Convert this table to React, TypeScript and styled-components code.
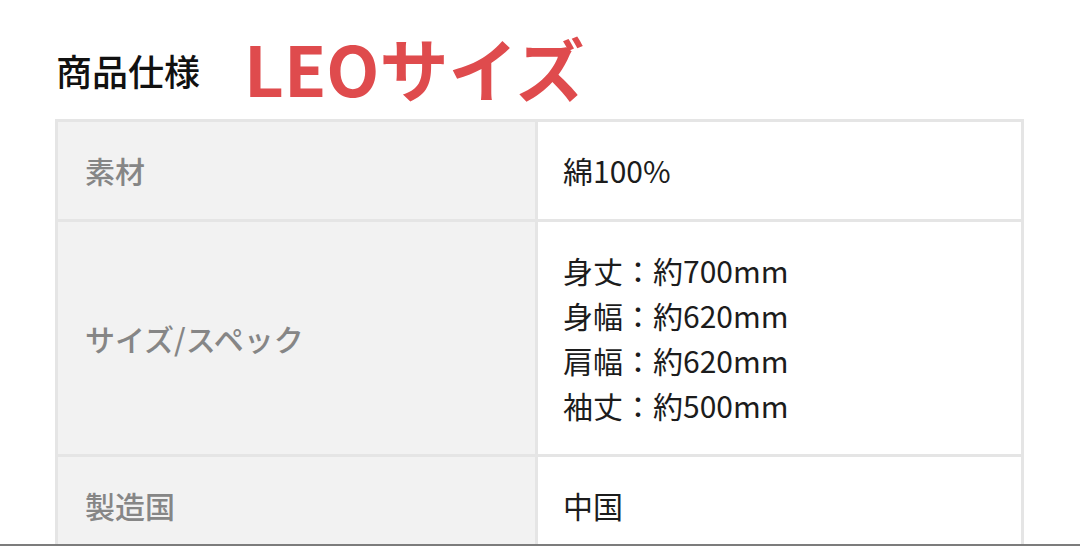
import React from "react";
import styled, { createGlobalStyle } from "styled-components";

const Global = createGlobalStyle`
  html, body { margin: 0; padding: 0; background: #ffffff; }
  body { font-family: "Noto Sans CJK JP", "Noto Sans", sans-serif; }
`;

const Page = styled.div`
  width: 1080px;
  height: 546px;
  box-sizing: border-box;
  overflow: hidden;
  border-bottom: 2px solid #7c7c7c;
  padding: 24px 0 0 55px;
`;

const Heading = styled.div`
  display: flex;
  align-items: center;
  gap: 44px;
  height: 86px;
  margin-bottom: 9px;
  padding-left: 1px;
`;

const HeadingText = styled.h2`
  margin: 6px 0 0;
  font-size: 36px;
  font-weight: 500;
  color: #111;
  line-height: 1;
`;

const SizeName = styled.span`
  font-size: 69px;
  font-weight: 700;
  color: #df4b4d;
  line-height: 1;
`;

const Table = styled.div`
  width: 969px;
  box-sizing: border-box;
  display: grid;
  grid-template-columns: 477px 483px;
  gap: 3px;
  background: #e5e5e5;
  border: 3px solid #e5e5e5;
`;

const Cell = styled.div<{ $label?: boolean }>`
  display: flex;
  flex-direction: column;
  justify-content: center;
  padding: 26px 0 26px ${(p) => (p.$label ? "27px" : "25px")};
  background: ${(p) => (p.$label ? "#f2f2f2" : "#ffffff")};
  color: ${(p) => (p.$label ? "#868686" : "#1c1c1c")};
  font-size: 30px;
  font-weight: ${(p) => (p.$label ? 500 : 400)};
  line-height: 45px;
`;

const Line = styled.div``;

const rows: { label: string; value: string[] }[] = [
  { label: "素材", value: ["綿100%"] },
  {
    label: "サイズ/スペック",
    value: ["身丈：約700mm", "身幅：約620mm", "肩幅：約620mm", "袖丈：約500mm"],
  },
  { label: "製造国", value: ["中国"] },
];

export default function App() {
  return (
    <>
      <Global />
      <Page>
        <Heading>
          <HeadingText>商品仕様</HeadingText>
          <SizeName>LEOサイズ</SizeName>
        </Heading>
        <Table>
          {rows.map((r) => (
            <React.Fragment key={r.label}>
              <Cell $label>{r.label}</Cell>
              <Cell>
                {r.value.map((v) => (
                  <Line key={v}>{v}</Line>
                ))}
              </Cell>
            </React.Fragment>
          ))}
        </Table>
      </Page>
    </>
  );
}
